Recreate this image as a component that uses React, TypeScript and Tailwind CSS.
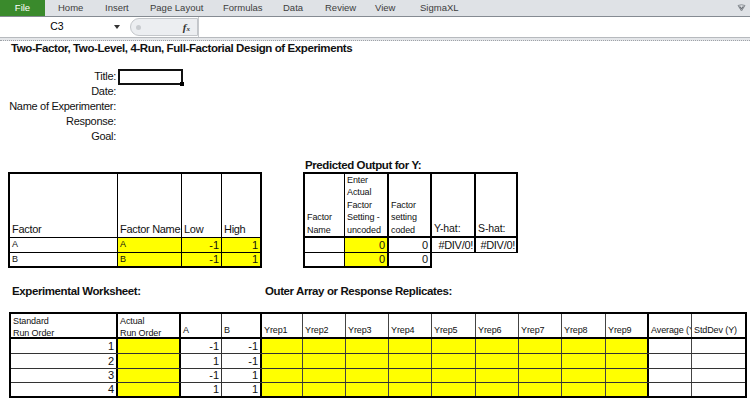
import React from "react";

const tabs = [
  { label: "Home", w: "w-[47px]" },
  { label: "Insert", w: "w-[45px]" },
  { label: "Page Layout", w: "w-[73px]" },
  { label: "Formulas", w: "w-[60px]" },
  { label: "Data", w: "w-[42px]" },
  { label: "Review", w: "w-[50px]" },
  { label: "View", w: "w-[45px]" },
  { label: "SigmaXL", w: "w-[60px]" },
];

const infoLabels = ["Title:", "Date:", "Name of Experimenter:", "Response:", "Goal:"];

// worksheet column classes, thick lines at group edges
const wsCols = [
  "w-[107px] border-r-2 border-black",
  "w-[63px] border-r-2 border-black",
  "w-[41px] border-r border-[#333]",
  "w-[40px] border-r-2 border-black",
  "w-[41px] border-r border-[#444]",
  "w-[43px] border-r border-[#444]",
  "w-[43px] border-r border-[#444]",
  "w-[43px] border-r border-[#444]",
  "w-[44px] border-r border-[#444]",
  "w-[43px] border-r border-[#444]",
  "w-[43px] border-r border-[#444]",
  "w-[44px] border-r border-[#444]",
  "w-[43px] border-r-2 border-black",
  "w-[43px] border-r border-[#444]",
  "w-[53px]",
];

const runs = [
  { std: 1, a: -1, b: -1, h: "h-[15px] border-b border-[#333]" },
  { std: 2, a: 1, b: -1, h: "h-[15px] border-b border-[#333]" },
  { std: 3, a: -1, b: 1, h: "h-[14px] border-b border-[#333]" },
  { std: 4, a: 1, b: 1, h: "h-[13px]" },
];

function Ribbon() {
  return (
    <div className="flex h-[17px] items-center border-b border-[#858b92] bg-[#dfe2e6] font-['Liberation_Sans',sans-serif] text-[9.5px] text-[#3d3d3d]">
      <div className="flex h-full w-[45px] items-center justify-center bg-[#3a8a2c] text-white">
        File
      </div>
      <div className="flex flex-1 items-center pl-[13px]">
        {tabs.map((t) => (
          <span key={t.label} className={t.w}>
            {t.label}
          </span>
        ))}
      </div>
      <svg width="9" height="8" viewBox="0 0 9 8" className="mr-[4px]">
        <path d="M1 1.5 Q4.5 0 8 1.5 L4.5 7 Z" fill="none" stroke="#8a8f95" strokeWidth="1" />
        <path d="M2.5 2.5 L4.5 4.8 L6.5 2.5" fill="none" stroke="#6d7278" strokeWidth="1.2" />
      </svg>
    </div>
  );
}

function FormulaBar() {
  return (
    <div className="font-['Liberation_Sans',sans-serif]">
      <div className="flex h-[20px] items-center bg-white">
        <div className="flex h-full w-[128px] items-center">
          <span className="w-[114px] text-center text-[10.5px] text-black">C3</span>
          <svg width="6" height="4" viewBox="0 0 6 4">
            <path d="M0 0 H6 L3 4 Z" fill="#333" />
          </svg>
        </div>
        <div className="ml-[2px] flex h-[18px] w-[68px] items-center justify-between rounded-l-[9px] border border-[#c3c6ca] bg-[#eceef1] pl-[5px] pr-[7px]">
          <span className="h-[5px] w-[5px] rounded-full bg-[#c9ccd0]" />
          <span className="font-['Liberation_Serif',serif] text-[11px] font-bold italic text-[#333]">
            f<span className="text-[7px]">x</span>
          </span>
        </div>
        <div className="h-full flex-1 border-l border-[#c6c9cd]" />
      </div>
      <div className="h-[1px] bg-[#b7babe]" />
      <div className="h-[3px] border-b border-dotted border-[#9fa3a8] bg-[#e4e6e9]" />
    </div>
  );
}

function FactorTable() {
  return (
    <div className="ml-[8px] mt-[13px] flex w-[254px] flex-col border-2 border-black">
      <div className="flex h-[64px] items-end border-b border-black text-[11px] leading-[13px] tracking-[-0.3px]">
        <div className="flex h-full w-[108px] items-end border-r border-black pb-[1px] pl-[2px]">Factor</div>
        <div className="flex h-full w-[64px] items-end whitespace-nowrap border-r border-black pb-[1px] pl-[2px]">
          Factor Name
        </div>
        <div className="flex h-full w-[40px] items-end border-r border-black pb-[1px] pl-[2px]">Low</div>
        <div className="flex h-full w-[38px] items-end pb-[1px] pl-[2px]">High</div>
      </div>
      {[
        { f: "A", h: "h-[15px] border-b border-black" },
        { f: "B", h: "h-[13px]" },
      ].map((r) => (
        <div key={r.f} className={`flex ${r.h}`}>
          <div className="flex h-full w-[108px] items-center border-r border-black pl-[2px] text-[9px]">{r.f}</div>
          <div className="flex h-full w-[64px] items-center border-r border-black bg-[#ffff00] pl-[2px] text-[9px]">{r.f}</div>
          <div className="flex h-full w-[40px] items-center justify-end border-r border-black bg-[#ffff00] pr-[2px] text-[11px]">-1</div>
          <div className="flex h-full w-[38px] items-center justify-end bg-[#ffff00] pr-[2px] text-[11px]">1</div>
        </div>
      ))}
    </div>
  );
}

function PredictedTable() {
  return (
    <div className="ml-[41px]">
      <div className="h-[13px] whitespace-nowrap pl-[2px] text-[11.5px] font-bold leading-[13px] tracking-[-0.4px]">
        Predicted Output for Y:
      </div>
      <div className="flex h-[66px] w-[215px] border-2 border-black text-[9px] leading-[12.5px] tracking-[-0.1px]">
        <div className="flex h-full w-[40px] flex-col justify-end border-r border-black pl-[2px]">
          <span>Factor</span>
          <span>Name</span>
        </div>
        <div className="flex h-full w-[44px] flex-col justify-end whitespace-nowrap border-r-2 border-black pl-[2px]">
          <span>Enter</span>
          <span>Actual</span>
          <span>Factor</span>
          <span>Setting -</span>
          <span>uncoded</span>
        </div>
        <div className="flex h-full w-[43px] flex-col justify-end border-r-2 border-black pl-[2px]">
          <span>Factor</span>
          <span>setting</span>
          <span>coded</span>
        </div>
        <div className="flex h-full w-[44px] items-end border-r-2 border-black pb-[1px] pl-[2px] text-[10.5px] leading-[13px]">
          Y-hat:
        </div>
        <div className="flex h-full w-[40px] items-end pb-[1px] pl-[2px] text-[10.5px] leading-[13px]">S-hat:</div>
      </div>
      <div className="flex h-[15px] w-[215px] border-x-2 border-b border-black text-[11px]">
        <div className="h-full w-[40px] border-r border-black" />
        <div className="flex h-full w-[44px] items-center justify-end border-r-2 border-black bg-[#ffff00] pr-[2px]">0</div>
        <div className="flex h-full w-[43px] items-center justify-end border-r-2 border-black pr-[2px]">0</div>
        <div className="flex h-full w-[44px] items-center justify-end border-r-2 border-black pr-[1px] tracking-[-0.3px]">
          #DIV/0!
        </div>
        <div className="flex h-full w-[40px] items-center justify-end pr-[1px] tracking-[-0.3px]">#DIV/0!</div>
      </div>
      <div className="flex h-[15px] w-[129px] border-x-2 border-b-2 border-black text-[11px]">
        <div className="h-full w-[40px] border-r border-black" />
        <div className="flex h-full w-[44px] items-center justify-end border-r-2 border-black bg-[#ffff00] pr-[2px]">0</div>
        <div className="flex h-full w-[41px] items-center justify-end pr-[2px]">0</div>
      </div>
    </div>
  );
}

function Worksheet() {
  const yreps = ["Yrep1", "Yrep2", "Yrep3", "Yrep4", "Yrep5", "Yrep6", "Yrep7", "Yrep8", "Yrep9"];
  return (
    <div className="ml-[9px] mt-[15px] flex w-[738px] flex-col border-2 border-black">
      <div className="flex h-[25px] border-b-2 border-black text-[9px] leading-[12px] tracking-[-0.1px]">
        <div className={`flex h-full flex-col pl-[2px] pt-[1px] ${wsCols[0]}`}>
          <span>Standard</span>
          <span>Run Order</span>
        </div>
        <div className={`flex h-full flex-col pl-[2px] pt-[1px] ${wsCols[1]}`}>
          <span>Actual</span>
          <span>Run Order</span>
        </div>
        <div className={`flex h-full items-end pb-[1px] pl-[2px] ${wsCols[2]}`}>A</div>
        <div className={`flex h-full items-end pb-[1px] pl-[2px] ${wsCols[3]}`}>B</div>
        {yreps.map((y, i) => (
          <div key={y} className={`flex h-full items-end pb-[1px] pl-[2px] ${wsCols[i + 4]}`}>
            {y}
          </div>
        ))}
        <div className={`flex h-full items-end overflow-hidden whitespace-nowrap pb-[1px] pl-[2px] ${wsCols[13]}`}>
          Average (Y)
        </div>
        <div className={`flex h-full items-end whitespace-nowrap pb-[1px] pl-[2px] ${wsCols[14]}`}>StdDev (Y)</div>
      </div>
      {runs.map((r) => (
        <div key={r.std} className={`flex text-[11px] ${r.h}`}>
          <div className={`flex h-full items-center justify-end pr-[2px] ${wsCols[0]}`}>{r.std}</div>
          <div className={`h-full bg-[#ffff00] ${wsCols[1]}`} />
          <div className={`flex h-full items-center justify-end pr-[2px] ${wsCols[2]}`}>{r.a}</div>
          <div className={`flex h-full items-center justify-end pr-[2px] ${wsCols[3]}`}>{r.b}</div>
          {yreps.map((y, i) => (
            <div key={y} className={`h-full bg-[#ffff00] ${wsCols[i + 4]}`} />
          ))}
          <div className={`h-full ${wsCols[13]}`} />
          <div className={`h-full ${wsCols[14]}`} />
        </div>
      ))}
    </div>
  );
}

export default function App() {
  return (
    <div className="h-[404px] w-[750px] overflow-hidden bg-white text-black">
      <Ribbon />
      <FormulaBar />
      <div className="font-['Liberation_Sans',sans-serif] text-[#111]">
        <div className="h-[14px] whitespace-nowrap pl-[11px] text-[11.5px] font-bold leading-[14px] tracking-[-0.4px]">
          Two-Factor, Two-Level, 4-Run, Full-Factorial Design of Experiments
        </div>

        <div className="mt-[14px] flex flex-col text-[11px] tracking-[-0.3px]">
          {infoLabels.map((l, i) => (
            <div key={l} className="flex h-[15px] items-center">
              <div className="w-[116px] whitespace-nowrap text-right leading-none">{l}</div>
              {i === 0 && (
                <div className="relative ml-[2px] h-[16px] w-[65px] border-2 border-[#111]">
                  <span className="absolute -bottom-[3px] -right-[3px] h-[4px] w-[4px] bg-black" />
                </div>
              )}
            </div>
          ))}
        </div>

        <div className="mt-[15px] flex items-start">
          <FactorTable />
          <PredictedTable />
        </div>

        <div className="mt-[17px] flex h-[12px] items-center whitespace-nowrap text-[11.5px] font-bold leading-[12px] tracking-[-0.4px]">
          <div className="w-[265px] pl-[12px]">Experimental Worksheet:</div>
          <div>Outer Array or Response Replicates:</div>
        </div>

        <Worksheet />
      </div>
    </div>
  );
}
